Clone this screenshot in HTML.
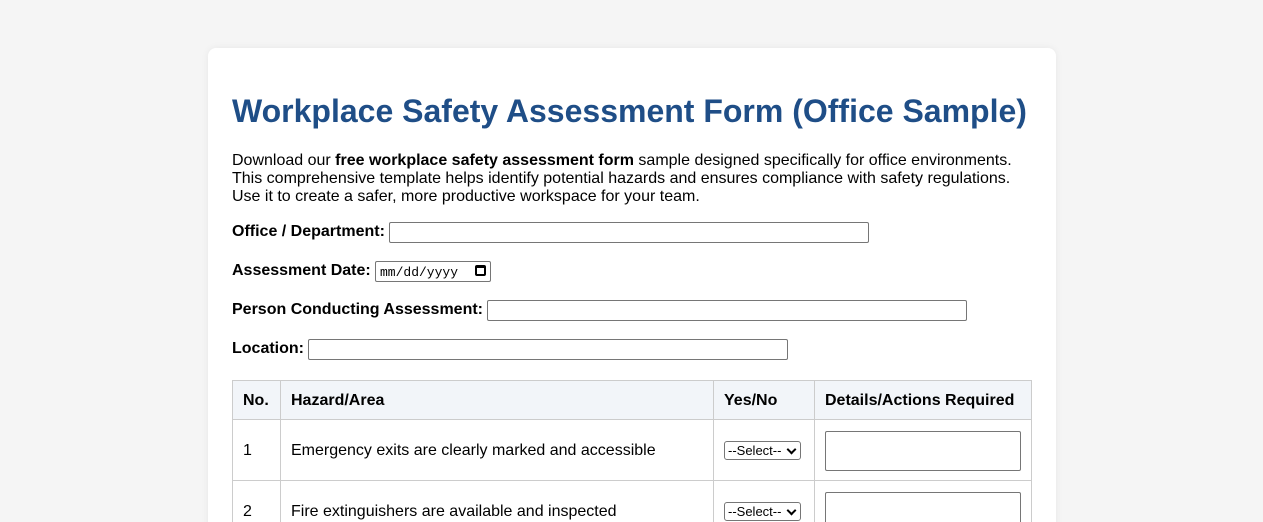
<!DOCTYPE html>
<html style="height:522px;overflow:hidden"><head><style>
*{box-sizing:border-box}
body{margin:0;background:#f5f5f5;font-family:"Liberation Sans",Arial,sans-serif;color:#000;width:1263px;height:522px;overflow:hidden;position:relative}
.card{position:absolute;left:208px;top:48px;width:848px;height:520px;background:#fff;border-radius:8px;box-shadow:0 0 8px rgba(0,0,0,.06)}
.a{position:absolute;white-space:nowrap}
h1{position:absolute;left:232px;top:92px;margin:0;font-size:32px;line-height:38px;color:#1f4e87;font-weight:bold}
p{position:absolute;left:232px;top:152px;margin:0;font-size:16px;line-height:18px;width:800px}
.lbl{font-size:16px;font-weight:bold;line-height:18px}
.inp{position:absolute;height:21px;border:1px solid #767676;border-radius:2px;background:#fff}
.date{font-family:"Liberation Mono",monospace;font-size:13px;padding:3px 0 0 4px;color:#000}
table{position:absolute;left:232px;top:380px;border-collapse:collapse;font-size:16px;width:800px}
td,th{border:1px solid #ccc;padding:1px 10px 0;text-align:left}
th{background:#f2f5f9;height:39px;font-weight:bold}
td{height:61px}
.sel{display:inline-block;width:77px;height:19px;border:1px solid #767676;border-radius:3px;font-size:13px;line-height:17px;padding-left:3px;position:relative}
.sel:after{content:"";position:absolute;right:5px;top:4px;width:5px;height:5px;border-right:2px solid #000;border-bottom:2px solid #000;transform:rotate(45deg)}
.ta{display:block;width:196px;height:40px;border:1px solid #767676;border-radius:2px}
</style></head><body>
<div class="card"></div>
<h1>Workplace Safety Assessment Form (Office Sample)</h1>
<p>Download our <b>free workplace safety assessment form</b> sample designed specifically for office environments. This comprehensive template helps identify potential hazards and ensures compliance with safety regulations. Use it to create a safer, more productive workspace for your team.</p>
<div class="a lbl" style="left:232px;top:223px">Office / Department:</div>
<div class="inp" style="left:389px;top:222px;width:480px"></div>
<div class="a lbl" style="left:232px;top:262px">Assessment Date:</div>
<div class="inp date" style="left:375px;top:261px;width:116px">mm/dd/yyyy <span style="position:absolute;right:4px;top:3px;width:11px;height:11px;border:2px solid #000;border-top-width:3px;border-radius:2px"></span></div>
<div class="a lbl" style="left:232px;top:301px">Person Conducting Assessment:</div>
<div class="inp" style="left:487px;top:300px;width:480px"></div>
<div class="a lbl" style="left:232px;top:340px">Location:</div>
<div class="inp" style="left:308px;top:339px;width:480px"></div>
<table>
<tr><th style="width:48px">No.</th><th style="width:433px">Hazard/Area</th><th style="width:101px">Yes/No</th><th>Details/Actions Required</th></tr>
<tr><td>1</td><td>Emergency exits are clearly marked and accessible</td><td><span class="sel">--Select--</span></td><td><span class="ta"></span></td></tr>
<tr><td>2</td><td>Fire extinguishers are available and inspected</td><td><span class="sel">--Select--</span></td><td><span class="ta"></span></td></tr>
</table>
</body></html>
